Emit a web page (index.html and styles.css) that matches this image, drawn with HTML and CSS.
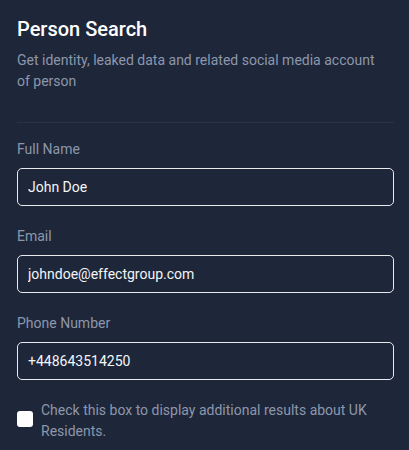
FILE: index.html
```html
<!DOCTYPE html>
<html lang="en">
<head>
<meta charset="utf-8">
<title>Person Search</title>
<link rel="stylesheet" href="styles.css">
</head>
<body>
<main class="panel">
  <header class="head">
    <h1 class="title">Person Search</h1>
    <p class="subtitle">Get identity, leaked data and related social media account of person</p>
  </header>
  <form class="form">
    <div class="field">
      <label class="label" for="name">Full Name</label>
      <input class="input" id="name" type="text" value="John Doe">
    </div>
    <div class="field">
      <label class="label" for="email">Email</label>
      <input class="input" id="email" type="text" value="johndoe@effectgroup.com">
    </div>
    <div class="field">
      <label class="label" for="phone">Phone Number</label>
      <input class="input" id="phone" type="text" value="+448643514250">
    </div>
    <label class="check">
      <span class="box"></span>
      <span class="check-text">Check this box to display additional results about UK Residents.</span>
    </label>
  </form>
</main>
</body>
</html>
```
FILE: styles.css
```css
html, body {
  margin: 0;
  padding: 0;
  background: #1e263a;
}
body {
  font-family: "Roboto", "Noto Sans", sans-serif;
  color: #ffffff;
}
.panel {
  padding: 16px 15px 0 17px;
}
.head {
  padding-bottom: 30px;
  border-bottom: 1px solid #28324a;
}
.title {
  margin: 0;
  font-size: 20px;
  line-height: 26px;
  font-weight: 500;
  color: #ffffff;
}
.subtitle {
  margin: 8px 0 0;
  max-width: 362px;
  font-size: 14px;
  line-height: 21px;
  color: #8d97ab;
}
.form {
  display: flex;
  flex-direction: column;
  padding-top: 16px;
}
.field {
  display: flex;
  flex-direction: column;
  gap: 9px;
  margin-bottom: 20px;
}
.label {
  font-size: 14px;
  line-height: 20px;
  color: #8d97ab;
}
.input {
  box-sizing: border-box;
  height: 38px;
  width: 100%;
  margin: 0;
  padding: 0 10px;
  background: #1e263a;
  border: 1px solid #e8eaee;
  border-radius: 5px;
  color: #f4f5f7;
  font-family: inherit;
  font-size: 14px;
  outline: none;
}
.check {
  display: flex;
  gap: 8px;
  align-items: flex-start;
  margin-top: 0;
}
.box {
  flex: none;
  width: 16px;
  height: 16px;
  margin-top: 11px;
  background: #ffffff;
  border-radius: 3px;
}
.check-text {
  font-size: 14px;
  line-height: 21px;
  color: #8d97ab;
}
```
